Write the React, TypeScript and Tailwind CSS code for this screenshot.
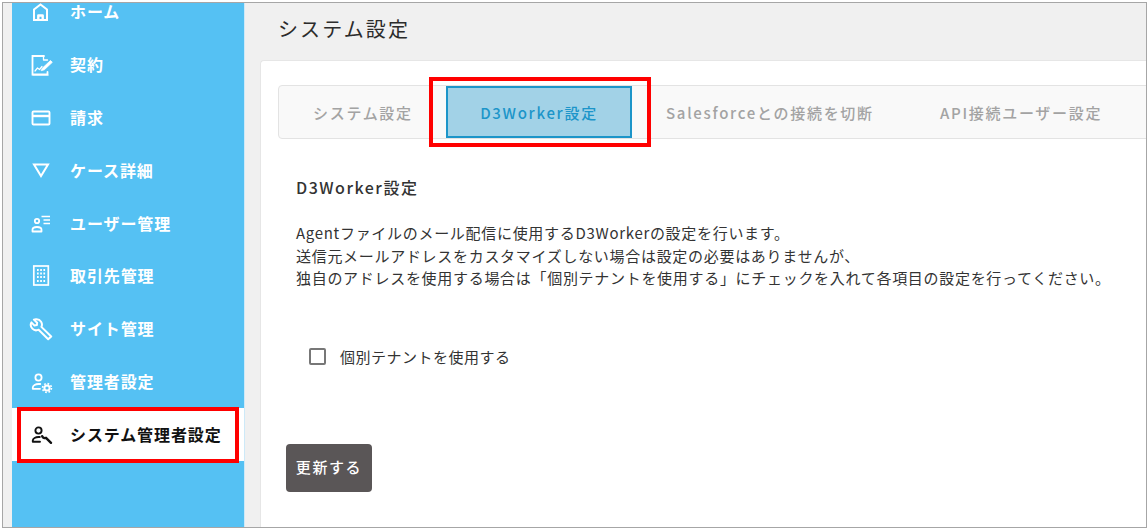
const jp = "font-['Noto_Sans_CJK_JP','Noto_Sans',sans-serif]";

function Ico({ children }: { children: React.ReactNode }) {
  return (
    <svg viewBox="0 0 24 24" className="size-6 shrink-0" fill="none" stroke="currentColor" strokeWidth="2" strokeLinecap="round" strokeLinejoin="round">
      {children}
    </svg>
  );
}

const menu = [
  {
    label: 'ホーム',
    icon: (
      <Ico>
        <path d="M5 20V9.5L11.5 4.5 18 9.5V20z" strokeLinecap="butt" strokeLinejoin="miter" />
        <path d="M9.3 20v-4.5h4.4V20" strokeWidth="2.4" strokeLinecap="butt" />
      </Ico>
    ),
  },
  {
    label: '契約',
    icon: (
      <Ico>
        <path d="M15 3H3.5v18.5h15V19" strokeWidth="1.8" strokeLinejoin="miter" />
        <path d="M14.5 3v4h4" strokeWidth="1.3" />
        <path d="M6 18l2.5-3 2 1.5 2.5-3" strokeWidth="1.2" />
        <path d="M13.5 15l8-7.5 1.8 1.8-8 7.5-2.8.8z" fill="currentColor" strokeWidth="0.8" />
        <path d="M4 22h15" strokeWidth="1.2" />
      </Ico>
    ),
  },
  {
    label: '請求',
    icon: (
      <Ico>
        <rect x="3.5" y="5.5" width="17" height="13" rx="1" strokeWidth="1.9" />
        <path d="M3.5 10h17" strokeWidth="2.4" strokeLinecap="butt" />
      </Ico>
    ),
  },
  {
    label: 'ケース詳細',
    icon: (
      <Ico>
        <path d="M5 5.5h14l-7 11.5z" strokeLinecap="butt" strokeLinejoin="miter" />
      </Ico>
    ),
  },
  {
    label: 'ユーザー管理',
    icon: (
      <Ico>
        <circle cx="8" cy="9" r="2.2" strokeWidth="1.8" />
        <path d="M3.5 19.5v-1.8c0-1.7 2-2.7 4.5-2.7s4.5 1 4.5 2.7v1.8z" strokeWidth="1.8" />
        <path d="M12.5 4.5h8.5M14.5 8h6.5M14.5 11.5h6.5" strokeWidth="1.5" strokeLinecap="butt" />
      </Ico>
    ),
  },
  {
    label: '取引先管理',
    icon: (
      <Ico>
        <rect x="4.8" y="2" width="14.5" height="19" strokeWidth="1.7" strokeLinejoin="miter" />
        <path d="M8 6h1.7M11.2 6h1.7M14.4 6h1.7M8 9.5h1.7M11.2 9.5h1.7M14.4 9.5h1.7M8 13h1.7M11.2 13h1.7M14.4 13h1.7M8 17h1.7M11.2 17h1.7M14.4 17h1.7" strokeWidth="1.9" strokeLinecap="butt" />
      </Ico>
    ),
  },
  {
    label: 'サイト管理',
    icon: (
      <Ico>
        <path d="M7.5 2.3a5 5 0 0 0-2.6.3l3.2 3.1-.2 2.4-2.4.5L2.4 5.4a5.4 5.4 0 0 0 7.2 7.3l9.6 9.6 3-2.8-9.8-9.6a5.3 5.3 0 0 0-4.9-7.6z" strokeWidth="2" />
      </Ico>
    ),
  },
  {
    label: '管理者設定',
    icon: (
      <Ico>
        <circle cx="9.5" cy="7.5" r="3.1" strokeWidth="1.8" />
        <path d="M3.8 18.8v-1.2c0-2.2 2.8-3.6 5.7-3.6h1.8M3.8 18.8h7.2" strokeWidth="1.8" />
        <circle cx="18" cy="18" r="2.6" strokeWidth="2" />
        <circle cx="18" cy="18" r="4.4" strokeWidth="1.7" strokeDasharray="1.7 1.75" strokeLinecap="butt" />
      </Ico>
    ),
  },
];

const tabs = ['システム設定', 'D3Worker設定', 'Salesforceとの接続を切断', 'API接続ユーザー設定'];

export default function App() {
  return (
    <div className={`${jp} relative h-[529px] w-[1147px] overflow-hidden bg-white pt-[2px] pl-[2px]`}>
      <div className="flex h-[526px] w-[1145px] overflow-hidden border border-[#a6a6a6] bg-[#f0f0f0] pl-[9px]">
        <aside className="flex w-[233px] shrink-0 flex-col border-r border-[#cde9f8] bg-[#55c1f3] text-white">
          <ul className="-mt-[17px] flex flex-col">
            {menu.map((m) => (
              <li key={m.label} className="flex h-[52.8px] items-center pl-[17px] text-[16px] font-bold tracking-[0.9px]">
                <span className="flex w-[41px]">{m.icon}</span>
                <span className="pb-[2px]">{m.label}</span>
              </li>
            ))}
            <li className="relative flex h-[53px] items-center bg-white pl-[17px] text-[16px] font-bold tracking-[0.9px] text-[#111]">
              <span className="flex w-[41px]">
                <Ico>
                  <circle cx="9.5" cy="7.5" r="3.1" strokeWidth="1.9" />
                  <path d="M3.8 18.8v-1.2c0-2.2 2.8-3.6 5.7-3.6h1.3M3.8 18.8h7.2" strokeWidth="1.9" />
                  <path d="M13.2 13.2c.8 1.8 2.4 2.3 3.8 1.6l5 5" strokeWidth="2.4" />
                </Ico>
              </span>
              <span className="pb-[2px]">システム管理者設定</span>
              <span className="absolute -top-[1px] left-[5px] h-[56px] w-[222px] border-[4px] border-[#ff0000]" />
            </li>
          </ul>
        </aside>

        <main className="flex min-w-0 flex-1 flex-col pl-[15px]">
          <h1 className="flex h-[57px] shrink-0 items-center pb-[6px] pl-[18px] text-[20px] leading-none font-normal tracking-[2.1px] text-[#2b2b2b]">
            システム設定
          </h1>
          <section className="flex-1 rounded-tl-[4px] border-t border-l border-[#e6e6e6] bg-white pt-[24px] pl-[17px]">
            <nav className="relative flex h-[54px] w-[900px] items-center rounded-l-[4px] border border-[#e3e3e3] bg-[#f9f9f9] pt-[3px] text-[15px] font-medium tracking-[1.7px] text-[#a3a3a3]">
              <span className="ml-[34px] w-[133px]">{tabs[0]}</span>
              <span className="-mt-[3px] flex h-[52px] w-[186px] items-center justify-center border-2 border-[#1c95c9] bg-[#a2d2e7] pt-[3px] text-[#1c95c9]">
                {tabs[1]}
              </span>
              <span className="ml-[34px] w-[274px]">{tabs[2]}</span>
              <span>{tabs[3]}</span>
              <span className="absolute -top-[9px] left-[150px] h-[70px] w-[222px] border-[4px] border-[#ff0000]" />
            </nav>

            <div className="pl-[18px] text-[#333]">
              <h2 className="mt-[37px] text-[16px] leading-[22px] font-medium tracking-[1.5px]">D3Worker設定</h2>
              <p className="mt-[24px] text-[15px] leading-[22.5px] tracking-[0.7px]">
                Agentファイルのメール配信に使用するD3Workerの設定を行います。
                <br />
                送信元メールアドレスをカスタマイズしない場合は設定の必要はありませんが、
                <br />
                独自のアドレスを使用する場合は「個別テナントを使用する」にチェックを入れて各項目の設定を行ってください。
              </p>
              <label className="mt-[56px] ml-[13px] flex items-center gap-[14px] text-[15px] leading-[22px] tracking-[0.5px]">
                <span className="size-[17px] rounded-[2px] border-2 border-[#777] bg-white" />
                個別テナントを使用する
              </label>
            </div>

            <button className="mt-[76px] ml-[8px] flex h-[48px] w-[86px] items-center justify-center rounded-[4px] bg-[#5a5657] text-[15px] font-medium tracking-[1.6px] text-white">
              更新する
            </button>
          </section>
        </main>
      </div>
    </div>
  );
}
